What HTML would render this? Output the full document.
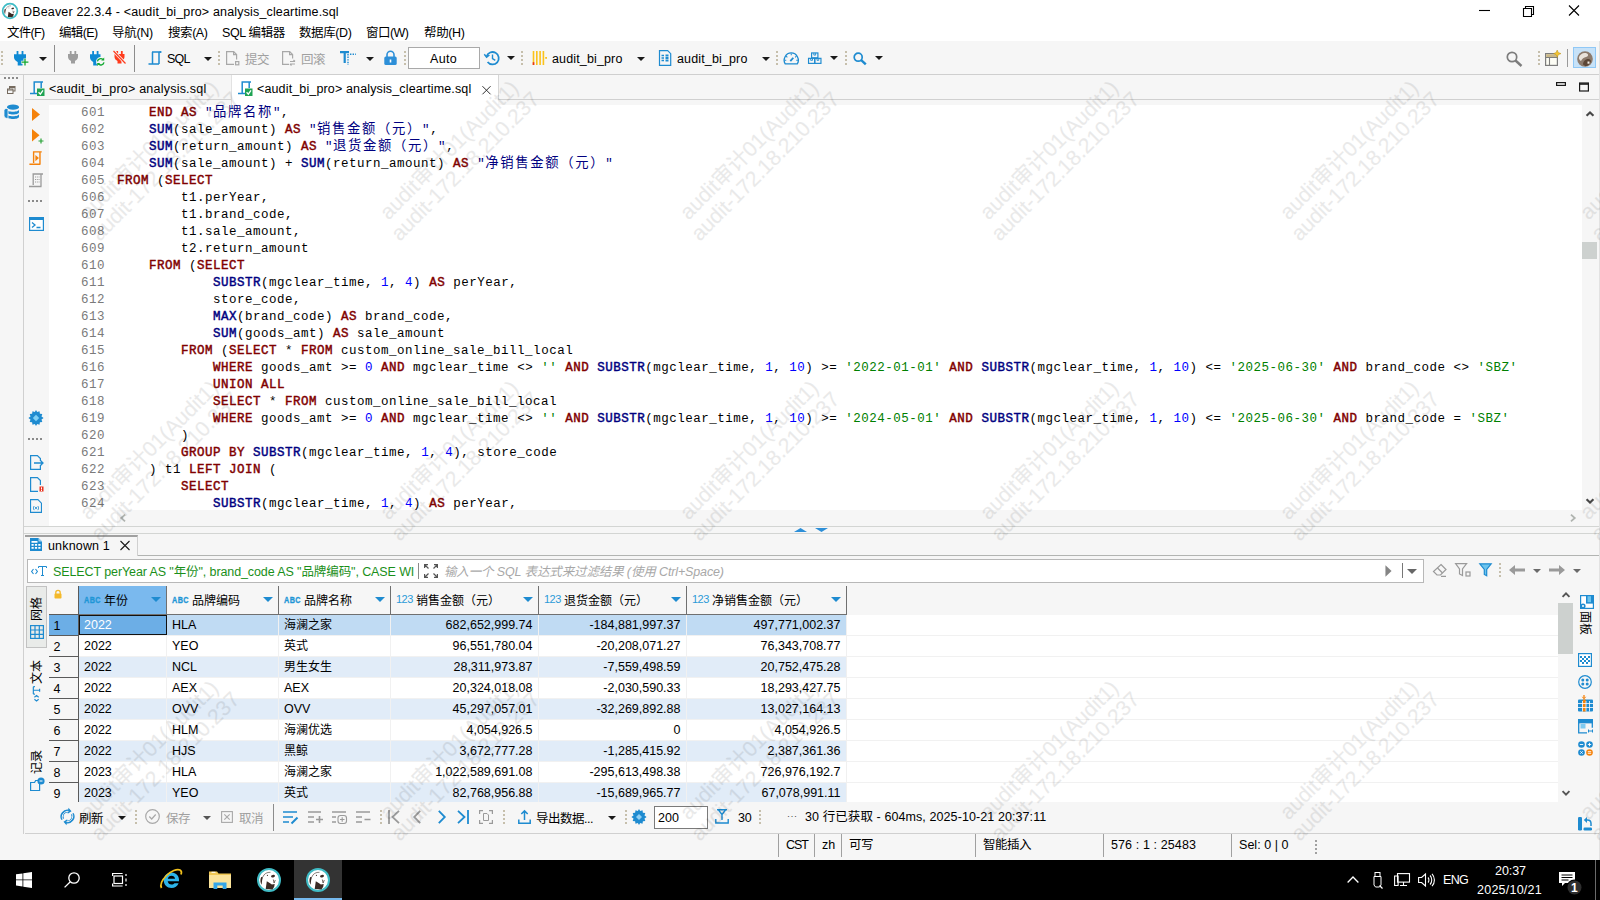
<!DOCTYPE html>
<html lang="zh"><head><meta charset="utf-8"><title>DBeaver 22.3.4 - &lt;audit_bi_pro&gt; analysis_cleartime.sql</title>
<style>
*{box-sizing:border-box;margin:0;padding:0}
html,body{width:1600px;height:900px;overflow:hidden;background:#f6f6f6}
body{position:relative;font-family:"Liberation Sans","Noto Sans CJK SC",sans-serif;font-size:12px;color:#000;line-height:1}
.abs{position:absolute}
.t{position:absolute;white-space:nowrap;line-height:16px;height:16px;font-size:12.500px}
svg{position:absolute;overflow:visible}
/* title + menu */
#title{left:0;top:0;width:1600px;height:23px;background:#fff}
#menu{left:0;top:23px;width:1600px;height:18px;background:#fff}
#toolbar{left:0;top:41px;width:1600px;height:34px;background:#f6f6f6;border-bottom:1px solid #cfcfcf}
.grip{position:absolute;width:2px;height:15px;background:repeating-linear-gradient(to bottom,#c6bfac 0,#c6bfac 2px,transparent 2px,transparent 4px)}
.vsep{position:absolute;width:1px;background:#8c8c8c}
.dd{position:absolute;width:0;height:0;border-left:4px solid transparent;border-right:4px solid transparent;border-top:4px solid #1a1a1a}
/* editor */
#code{left:49px;top:105px;width:1533px;height:405px;background:#fff;overflow:hidden}
.ln{position:absolute;left:0;height:17px;line-height:17px;white-space:pre;font-family:"Liberation Mono","Noto Sans CJK SC",monospace;font-size:12.500px;letter-spacing:.5px;color:#000}
.ln i{font-style:normal;color:#7a7a7a;position:absolute;left:32px}
.ln b{position:absolute;left:68px;font-weight:normal}
.k{color:#800000;-webkit-text-stroke:.45px #800000}
.f{color:#000080;-webkit-text-stroke:.45px #000080}
.n{color:#0000ff}
.s{color:#008000}
.q{color:#000080}
.c{font-family:"Noto Sans CJK SC",sans-serif;font-size:13.33px;letter-spacing:1.67px;line-height:0}
/* grid */
.hc{position:absolute;top:586px;height:29px;border-right:1px solid #707070;border-bottom:1px solid #707070;background:#f6f6f6}
.row{position:absolute;left:79px;width:767px;height:20px}
.row span{position:absolute;top:0;height:21px;line-height:21px;white-space:nowrap;font-size:12.500px}
.rh{position:absolute;left:49px;width:29px;height:21px;line-height:23px;padding-left:4.500px;border-bottom:1px solid #5a5a5a;font-size:12.500px}
.vt{position:absolute;width:24px;height:20px;line-height:20px;white-space:nowrap;transform-origin:0 0;transform:translateY(24px) rotate(-90deg);font-size:12px}
.vt2{position:absolute;width:24px;height:20px;line-height:20px;white-space:nowrap;transform-origin:0 0;transform:translateX(20px) rotate(90deg);font-size:12px}
.abc{font-size:9.800px;font-weight:bold;color:#1e96d6;-webkit-text-stroke:.35px #1e96d6;letter-spacing:.6px;transform:scaleX(.74);transform-origin:0 50%}
.n123{font-size:11px;color:#2d9bd8;letter-spacing:-.5px}
.wm{position:absolute;width:260px;height:50px;margin-left:-130px;margin-top:-25px;transform:rotate(-45deg);color:#000;opacity:.082;-webkit-text-stroke:.15px #000;letter-spacing:-.1px;font-size:21.33px;line-height:23px;white-space:nowrap;text-align:center;pointer-events:none;font-family:"Liberation Sans","Noto Sans CJK SC",sans-serif}
</style></head><body>
<!-- TITLE BAR -->
<div id="title" class="abs">
<svg style="left:2px;top:3px" width="16" height="16" viewBox="0 0 24 24"><circle cx="12" cy="12" r="11" fill="#fff" stroke="#40bcc6" stroke-width="2.600"/><path d="M9.800 13.200l2.900 1.700 2.200 1.700 2.800-.6-.5 2.800-1.700 2.600-6.800-.4.600-4.200z" fill="#3a2a24"/><ellipse cx="16" cy="8.200" rx="2" ry="1.250" transform="rotate(-12 16 8.200)" fill="#3a2a24"/><path d="M4.200 9C3 11.500 3.300 14.500 4.600 16.800 5 14 5 11.500 6 9.200z" fill="#3a2a24"/><path d="M5.800 9C7 5.800 10 4 13.500 4.300" fill="none" stroke="#3a2a24" stroke-width=".6"/><circle cx="10.400" cy="7.400" r=".55" fill="#3a2a24"/><path d="M16.300 11.500l.8 3.500 1.200-3" fill="none" stroke="#3a2a24" stroke-width=".7"/></svg>
<div class="t" style="left:23px;top:4px;letter-spacing:0.16px">DBeaver 22.3.4 - &lt;audit_bi_pro&gt; analysis_cleartime.sql</div>
<svg style="left:1479px;top:5px" width="110" height="12" viewBox="0 0 110 12" fill="none" stroke="#000" stroke-width="1.100"><path d="M0 5.500h11"/><path d="M44.500 3.500h8v8h-8zM46.500 3.500v-2h8v8h-2"/><path d="M90 .5l10 10M100 .5l-10 10"/></svg>
</div>
<!-- MENU BAR -->
<div id="menu" class="abs">
<div class="t" style="left:7px;top:2px;letter-spacing:-0.69px">文件(F)</div>
<div class="t" style="left:59px;top:2px;letter-spacing:-0.63px">编辑(E)</div>
<div class="t" style="left:112px;top:2px;letter-spacing:-0.27px">导航(N)</div>
<div class="t" style="left:168px;top:2px;letter-spacing:-0.43px">搜索(A)</div>
<div class="t" style="left:222px;top:2px;letter-spacing:-0.36px">SQL 编辑器</div>
<div class="t" style="left:299px;top:2px;letter-spacing:-0.39px">数据库(D)</div>
<div class="t" style="left:366px;top:2px;letter-spacing:-0.53px">窗口(W)</div>
<div class="t" style="left:424px;top:2px;letter-spacing:-0.37px">帮助(H)</div>
</div>
<!-- TOOLBAR -->
<div id="toolbar" class="abs">
<div class="grip" style="left:1px;top:10px"></div>
<!-- new connection -->
<svg style="left:13.500px;top:9.500px" width="16" height="16" viewBox="0 0 16 16"><path d="M2.600 0h1.800v3.300h3.200V0h1.800v3.300H12v3.200c0 2.300-2 3.800-3.500 4.500v3.500H3.700V11C2.200 10.300 0 8.800 0 6.500V3.300h2.600z" fill="#0e8ad4"/><path d="M11 7.500v7.500M7.200 11.200h7.600" stroke="#f6f6f6" stroke-width="3"/><path d="M11 7.800v6.800M7.600 11.200h6.800" stroke="#10a830" stroke-width="1.300"/></svg>
<div class="dd" style="left:39px;top:16px"></div>
<div class="vsep" style="left:54px;top:4px;height:27px"></div>
<!-- disconnected gray plug -->
<svg style="left:67.500px;top:10px" width="10" height="13" viewBox="0 0 10 13"><path d="M1.800 0h1.800v3h2.800V0h1.800v3H10v3c0 2-1.600 3.300-3 4v2.500H3V10C1.600 9.300 0 8 0 6V3h1.800z" fill="#9d9d9d"/></svg>
<!-- reconnect -->
<svg style="left:89.500px;top:9.500px" width="16" height="16" viewBox="0 0 16 16"><path d="M2.200 0H4v3.300h2.700V0h1.800v3.300h2V6.500c0 2.300-1.800 3.800-3.200 4.500v3.500H3.200V11C1.800 10.300 0 8.800 0 6.500V3.300h2.200z" fill="#0e8ad4"/><circle cx="10.700" cy="10.800" r="4.700" fill="#f6f6f6"/><path d="M7.400 10.300a3.400 3.400 0 0 1 5.600-1.800M14 11.300a3.400 3.400 0 0 1-5.600 1.800" stroke="#10a830" stroke-width="1.300" fill="none"/><path d="M14.200 6.600v3h-3zM7.200 15v-3h3z" fill="#10a830"/></svg>
<!-- disconnect red -->
<svg style="left:113px;top:10px" width="13" height="13" viewBox="0 0 13 13"><path d="M3.300 0h1.800v3h2.800V0h1.800v3h1.800v3c0 2-1.600 3.300-3 4v2.500h-4V10c-1.400-.7-3-2-3-4V3h1.800z" fill="#ff3b1c"/><path d="M.8.300l11.500 12" stroke="#f6f6f6" stroke-width="2.800"/><path d="M.5 0l12 12.500" stroke="#ff3b1c" stroke-width="1.200"/></svg>
<div class="vsep" style="left:134px;top:4px;height:27px"></div>
<!-- SQL script -->
<svg style="left:148px;top:10px" width="14" height="14" viewBox="0 0 14 14" fill="none" stroke="#1e8bd0" stroke-width="1.500"><path d="M4 1h9M4.500 1v11.500M11 1.500v11.500M.5 13h10.500"/><path d="M11.500 1h2" stroke-width="1.500"/></svg>
<div class="t" style="left:167px;top:10px;letter-spacing:-0.84px">SQL</div>
<div class="dd" style="left:204px;top:16px"></div>
<div class="grip" style="left:218px;top:10px"></div>
<!-- commit -->
<svg style="left:226px;top:10px" width="14" height="15" viewBox="0 0 14 15" fill="none" stroke="#a8a8a8" stroke-width="1.200"><path d="M8 13.400H.6V.6h7l3 3v5"/><path d="M7.600.6v3h3"/><rect x="9.600" y="10.600" width="3.200" height="3.200"/></svg>
<div class="t" style="left:245px;top:10.500px;color:#a0a0a0;letter-spacing:-0.51px">提交</div>
<!-- rollback -->
<svg style="left:282px;top:10px" width="14" height="15" viewBox="0 0 14 15" fill="none" stroke="#a8a8a8" stroke-width="1.200"><path d="M7 13.400H.6V.6h7l3 3v4"/><path d="M7.600.6v3h3"/><path d="M8 10.500h5M11.500 9l1.500 1.500M13 13H8M9.500 14.500L8 13"/></svg>
<div class="t" style="left:301px;top:10.500px;color:#a0a0a0;letter-spacing:-0.51px">回滚</div>
<!-- T icon -->
<svg style="left:340px;top:10px" width="17" height="15" viewBox="0 0 17 15"><path d="M0 0h9v2.200H5.800V12H3.600V2.200H0z" fill="#1e8bd0"/><path d="M8 3v11" stroke="#1e8bd0" stroke-width="1.400" stroke-dasharray="1.400 1.200"/><path d="M10 3.200h6" stroke="#1e8bd0" stroke-width="1.400" stroke-dasharray="1.400 1.200"/></svg>
<div class="dd" style="left:366px;top:16px"></div>
<!-- lock -->
<svg style="left:384px;top:9px" width="13" height="16" viewBox="0 0 13 16"><path d="M3 7V4.800a3.500 3.500 0 0 1 7 0V7" fill="none" stroke="#2d8fd8" stroke-width="1.600"/><rect x=".3" y="6.500" width="12.400" height="8.500" rx="1.500" fill="#2d8fd8"/><rect x="5.700" y="9.500" width="1.600" height="3" fill="#fff"/></svg>
<div class="grip" style="left:404px;top:10px"></div>
<div class="abs" style="left:408px;top:6px;width:72px;height:22px;background:#fff;border:1px solid #a9a9a9"></div>
<div class="t" style="left:430px;top:10px;letter-spacing:0.32px">Auto</div>
<!-- history -->
<svg style="left:484px;top:9px" width="16" height="16" viewBox="0 0 16 16" fill="none" stroke="#1e8bd0" stroke-width="1.800"><path d="M2.600 6.500A6.200 6.200 0 1 1 3.600 12"/><path d="M.3 4.300l2.300 3 2.800-2.300" stroke-width="1.400"/><path d="M8.500 4.500v4l2.800 1.800" stroke-width="1.400"/></svg>
<div class="dd" style="left:507px;top:15px"></div>
<div class="grip" style="left:521px;top:10px"></div>
<!-- db bars -->
<svg style="left:532px;top:9px" width="16" height="16" viewBox="0 0 16 16"><path d="M1.500 1v14M4.800 1v14M8.100 1v14M11.400 1v14" stroke="#fbc31c" stroke-width="1.600"/><rect x=".7" y="12.200" width="1.600" height="2.800" fill="#e8301c"/><rect x="13.200" y="7" width="1.800" height="1.800" fill="#fbc31c"/></svg>
<div class="t" style="left:552px;top:10px;letter-spacing:0.14px">audit_bi_pro</div>
<div class="dd" style="left:637px;top:16px"></div>
<!-- doc -->
<svg style="left:658px;top:9px" width="14" height="16" viewBox="0 0 14 16" fill="none" stroke="#1e8bd0" stroke-width="1.200"><path d="M1.500.7h8.200l3 3v11.600H1.500z"/><path d="M3.500 5.500h2.500M3.500 8h2.500M3.500 10.500h2.500" stroke-width="1.300"/><path d="M7.500 5.500h3M7.500 8h3M7.500 10.500h3" stroke-width="1.900"/></svg>
<div class="t" style="left:677px;top:10px;letter-spacing:0.14px">audit_bi_pro</div>
<div class="dd" style="left:762px;top:16px"></div>
<div class="grip" style="left:776px;top:10px"></div>
<!-- dashboard -->
<svg style="left:783px;top:11px" width="16.500" height="13" viewBox="0 0 17 14" fill="none" stroke="#1e8bd0" stroke-width="1.400"><path d="M2 12.800C-1 8 2.500 1 8.500 1s9.500 7 6.500 11.800z"/><path d="M8.500 1.500v2M3 4.500l1.300 1.300M14 4.500l-1.300 1.300M1.300 9h1.800M15.700 9h-1.800" stroke-width="1.100"/><path d="M7.500 9.800l3.200-3.600" stroke-width="2"/></svg>
<!-- boxes -->
<svg style="left:808px;top:11px" width="13.500" height="12.500" viewBox="0 0 15 13" fill="none" stroke="#1e8bd0" stroke-width="1.300"><rect x="4" y=".6" width="7" height="5.400"/><rect x=".6" y="6.600" width="6.900" height="5.600"/><rect x="7.500" y="6.600" width="6.900" height="5.600"/><path d="M6.500.6v2.400h2v-2.400M3 6.600v2.200h2v-2.200M10 6.600v2.200h2v-2.200" stroke-width="1"/></svg>
<div class="dd" style="left:830px;top:15px"></div>
<div class="grip" style="left:845px;top:10px"></div>
<!-- search blue -->
<svg style="left:853px;top:11px" width="14" height="13" viewBox="0 0 14 13" fill="none" stroke="#1e8bd0"><circle cx="5.200" cy="5.200" r="4" stroke-width="1.700"/><path d="M8.200 8.200l4.600 4.200" stroke-width="2.400"/></svg>
<div class="dd" style="left:875px;top:15px"></div>
<!-- right side -->
<svg style="left:1506px;top:10px" width="17" height="16" viewBox="0 0 17 16" fill="none" stroke="#7d7d7d"><circle cx="6" cy="6" r="4.700" stroke-width="1.700"/><path d="M9.500 9.500l6 5.500" stroke-width="2.400"/></svg>
<div class="grip" style="left:1538px;top:10px"></div>
<svg style="left:1545px;top:9px" width="16" height="16" viewBox="0 0 16 16"><rect x=".6" y="3.600" width="11.800" height="11.800" fill="#fdfdf5" stroke="#7d7d7d" stroke-width="1.200"/><path d="M.6 7.500h11.800M4.500 7.500v8" stroke="#7d7d7d" stroke-width="1.100" fill="none"/><rect x="1.200" y="4.200" width="10.600" height="2.800" fill="#c9b788"/><path d="M12.200 0l1.100 2.600 2.700 1-2.700 1.100-1.100 2.700-1.100-2.700-2.600-1.100 2.600-1z" fill="#f4c431" stroke="#b8901a" stroke-width=".5"/></svg>
<div class="vsep" style="left:1567px;top:8px;height:18px;background:#9a9a9a"></div>
<div class="abs" style="left:1573px;top:6px;width:23px;height:21px;background:#c7e2f8;border:1px solid #90c8f6"></div>
<svg style="left:1577px;top:9.500px" width="16" height="16" viewBox="0 0 16 16"><circle cx="8" cy="8" r="7.800" fill="#8c7a6c"/><path d="M2 6c1-3 5-5 8-3.500 2 1 1 3-1 3.500S5 7.500 4 10c-1-.5-2.500-2-2-4z" fill="#e9e2da"/><path d="M6 13.500c0-3 2-5.500 5.500-5.500 1.500 0 2.500 1 2.500 2.500-.8 2.500-3 4.300-5.500 4.800z" fill="#5c4636"/><path d="M10.500 10.500h2v2.200h-2z" fill="#f2ece4"/></svg>
</div>
<!-- LEFT STRIP + TABS -->
<div class="abs" style="left:23px;top:75px;width:1px;height:759px;background:#d0d0d0"></div>
<div class="abs" style="left:4px;top:77px;width:15px;height:2px;background:repeating-linear-gradient(to right,#8a8a8a 0,#8a8a8a 2px,transparent 2px,transparent 4px)"></div>
<svg style="left:7px;top:86px" width="9" height="8" viewBox="0 0 9 8" fill="#f6f6f6" stroke="#756a5e" stroke-width="1"><rect x="2.500" y=".5" width="5.500" height="4.500"/><rect x=".5" y="3" width="5.500" height="4.500"/><path d="M.5 4h5.500M2.500 1.500h5.500" stroke-width="1.200"/></svg>
<!-- db icon -->
<svg style="left:4px;top:104px" width="16" height="16" viewBox="0 0 16 16" fill="#1e8bd0"><ellipse cx="9" cy="3.200" rx="6" ry="2.600"/><path d="M3 5.500c0 3 12 3 12 0v2.700c0 3-12 3-12 0zM3 10c0 3 12 3 12 0v2.700c0 3-12 3-12 0z"/><path d="M0 6.500c0-2 3-2.300 4-2v10C2 14.500 0 13.500 0 12z" fill="#1e8bd0" stroke="#f6f6f6" stroke-width=".8"/></svg>
<!-- tab bar -->
<div class="abs" style="left:25px;top:99px;width:1575px;height:1px;background:#d0d0d0"></div>
<div class="abs" style="left:231px;top:75px;width:268px;height:30px;background:#fff;border-right:1px solid #d6d6d6;border-left:1px solid #e2e2e2"></div>
<div class="abs" style="left:498px;top:100px;width:1102px;height:5px;background:#f6f6f6"></div>
<svg class="tabico" style="left:30px;top:81px" width="15" height="15" viewBox="0 0 15 15"><g fill="none" stroke="#1e8bd0" stroke-width="1.500"><path d="M3.500 1h9.500M4.200 1v11M11.200 1v6M0 12.500h8"/></g><rect x="7" y="7.500" width="7.500" height="7.500" fill="#1fa353"/><path d="M8.600 11.200l1.700 1.900 2.700-3.800" fill="none" stroke="#fff" stroke-width="1.300"/></svg>
<div class="t" style="left:49px;top:81px;letter-spacing:0.22px">&lt;audit_bi_pro&gt; analysis.sql</div>
<svg class="tabico" style="left:238px;top:81px" width="15" height="15" viewBox="0 0 15 15"><g fill="none" stroke="#1e8bd0" stroke-width="1.500"><path d="M3.500 1h9.500M4.200 1v11M11.200 1v6M0 12.500h8"/></g><rect x="7" y="7.500" width="7.500" height="7.500" fill="#1fa353"/><path d="M8.600 11.200l1.700 1.900 2.700-3.800" fill="none" stroke="#fff" stroke-width="1.300"/></svg>
<div class="t" style="left:257px;top:81px;letter-spacing:0.14px">&lt;audit_bi_pro&gt; analysis_cleartime.sql</div>
<svg style="left:481.500px;top:85.500px" width="9" height="8.500" viewBox="0 0 10 9" stroke="#1a1a1a" stroke-width="1"><path d="M.5 0l9 9M9.500 0l-9 9"/></svg>
<!-- min / max -->
<svg style="left:1556px;top:82px" width="40" height="12" viewBox="0 0 40 12" fill="none" stroke="#1a1a1a" stroke-width="1.200"><rect x=".6" y=".6" width="8.800" height="2.800"/><rect x="23.600" y="1" width="8.800" height="8"/><path d="M23.600 2h8.800" stroke-width="1.600"/></svg>
<!-- EDITOR -->
<div id="code" class="abs">
<div class="ln" style="top:-0.4px"><i>601</i><b>    <span class="k">END</span> <span class="k">AS</span> <span class="q">"<span class="c">品牌名称</span>"</span>,</b></div>
<div class="ln" style="top:16.6px"><i>602</i><b>    <span class="f">SUM</span>(sale_amount) <span class="k">AS</span> <span class="q">"<span class="c">销售金额（元）</span>"</span>,</b></div>
<div class="ln" style="top:33.6px"><i>603</i><b>    <span class="f">SUM</span>(return_amount) <span class="k">AS</span> <span class="q">"<span class="c">退货金额（元）</span>"</span>,</b></div>
<div class="ln" style="top:50.6px"><i>604</i><b>    <span class="f">SUM</span>(sale_amount) + <span class="f">SUM</span>(return_amount) <span class="k">AS</span> <span class="q">"<span class="c">净销售金额（元）</span>"</span></b></div>
<div class="ln" style="top:67.6px"><i>605</i><b><span class="k">FROM</span> (<span class="k">SELECT</span></b></div>
<div class="ln" style="top:84.6px"><i>606</i><b>        t1.perYear,</b></div>
<div class="ln" style="top:101.6px"><i>607</i><b>        t1.brand_code,</b></div>
<div class="ln" style="top:118.6px"><i>608</i><b>        t1.sale_amount,</b></div>
<div class="ln" style="top:135.6px"><i>609</i><b>        t2.return_amount</b></div>
<div class="ln" style="top:152.6px"><i>610</i><b>    <span class="k">FROM</span> (<span class="k">SELECT</span></b></div>
<div class="ln" style="top:169.6px"><i>611</i><b>            <span class="f">SUBSTR</span>(mgclear_time, <span class="n">1</span>, <span class="n">4</span>) <span class="k">AS</span> perYear,</b></div>
<div class="ln" style="top:186.6px"><i>612</i><b>            store_code,</b></div>
<div class="ln" style="top:203.6px"><i>613</i><b>            <span class="f">MAX</span>(brand_code) <span class="k">AS</span> brand_code,</b></div>
<div class="ln" style="top:220.6px"><i>614</i><b>            <span class="f">SUM</span>(goods_amt) <span class="k">AS</span> sale_amount</b></div>
<div class="ln" style="top:237.6px"><i>615</i><b>        <span class="k">FROM</span> (<span class="k">SELECT</span> * <span class="k">FROM</span> custom_online_sale_bill_local</b></div>
<div class="ln" style="top:254.6px"><i>616</i><b>            <span class="k">WHERE</span> goods_amt &gt;= <span class="n">0</span> <span class="k">AND</span> mgclear_time &lt;&gt; <span class="s">&#x27;&#x27;</span> <span class="k">AND</span> <span class="f">SUBSTR</span>(mgclear_time, <span class="n">1</span>, <span class="n">10</span>) &gt;= <span class="s">&#x27;2022-01-01&#x27;</span> <span class="k">AND</span> <span class="f">SUBSTR</span>(mgclear_time, <span class="n">1</span>, <span class="n">10</span>) &lt;= <span class="s">&#x27;2025-06-30&#x27;</span> <span class="k">AND</span> brand_code &lt;&gt; <span class="s">&#x27;SBZ&#x27;</span></b></div>
<div class="ln" style="top:271.6px"><i>617</i><b>            <span class="k">UNION</span> <span class="k">ALL</span></b></div>
<div class="ln" style="top:288.6px"><i>618</i><b>            <span class="k">SELECT</span> * <span class="k">FROM</span> custom_online_sale_bill_local</b></div>
<div class="ln" style="top:305.6px"><i>619</i><b>            <span class="k">WHERE</span> goods_amt &gt;= <span class="n">0</span> <span class="k">AND</span> mgclear_time &lt;&gt; <span class="s">&#x27;&#x27;</span> <span class="k">AND</span> <span class="f">SUBSTR</span>(mgclear_time, <span class="n">1</span>, <span class="n">10</span>) &gt;= <span class="s">&#x27;2024-05-01&#x27;</span> <span class="k">AND</span> <span class="f">SUBSTR</span>(mgclear_time, <span class="n">1</span>, <span class="n">10</span>) &lt;= <span class="s">&#x27;2025-06-30&#x27;</span> <span class="k">AND</span> brand_code = <span class="s">&#x27;SBZ&#x27;</span></b></div>
<div class="ln" style="top:322.6px"><i>620</i><b>        )</b></div>
<div class="ln" style="top:339.6px"><i>621</i><b>        <span class="k">GROUP</span> <span class="k">BY</span> <span class="f">SUBSTR</span>(mgclear_time, <span class="n">1</span>, <span class="n">4</span>), store_code</b></div>
<div class="ln" style="top:356.6px"><i>622</i><b>    ) t1 <span class="k">LEFT</span> <span class="k">JOIN</span> (</b></div>
<div class="ln" style="top:373.6px"><i>623</i><b>        <span class="k">SELECT</span></b></div>
<div class="ln" style="top:390.6px"><i>624</i><b>            <span class="f">SUBSTR</span>(mgclear_time, <span class="n">1</span>, <span class="n">4</span>) <span class="k">AS</span> perYear,</b></div>
</div>
<!-- gutter icons -->
<svg style="left:32px;top:108px" width="8" height="13" viewBox="0 0 8 13"><path d="M0 0l8 6.500-8 6.500z" fill="#f5820b"/></svg>
<svg style="left:32px;top:129px" width="12" height="15" viewBox="0 0 12 15"><path d="M0 0l7.500 6.200L0 12.500z" fill="#f5820b"/><path d="M9 9.500v5M6.500 12h5" stroke="#2aa338" stroke-width="1.200"/></svg>
<svg style="left:29px;top:151px" width="14" height="15" viewBox="0 0 15 17" fill="none" stroke="#f5820b" stroke-width="1.600"><path d="M4 1h10M4.800 1v12.500M12 1v14M0 15h12.500"/><path d="M6.800 4.500l4 3.500-4 3.500z" fill="#f5820b" stroke="none"/></svg>
<svg style="left:29px;top:173px" width="15" height="15" viewBox="0 0 15 15" fill="none" stroke="#9b9b9b" stroke-width="1.300"><path d="M3.500 1h10.500M4.200 1v11M12 1v12.500M0 13.500h12.500"/><path d="M6 4h4.500M6 6.500h4.500M6 9h4.500" stroke-width="1" stroke-dasharray="1 .8"/></svg>
<div class="abs" style="left:28px;top:200px;width:15px;height:2px;background:repeating-linear-gradient(to right,#8a8a8a 0,#8a8a8a 2px,transparent 2px,transparent 4px)"></div>
<svg style="left:29px;top:217px" width="15" height="14" viewBox="0 0 15 14"><rect x=".6" y=".6" width="13.800" height="12.800" fill="#fff" stroke="#1e8bd0" stroke-width="1.200"/><rect x=".6" y=".6" width="13.800" height="2.400" fill="#1e8bd0"/><path d="M3 5.500l3 2.500-3 2.500M7.500 10.500h4" fill="none" stroke="#1e8bd0" stroke-width="1.300"/></svg>
<svg style="left:28px;top:410px" width="16" height="16" viewBox="0 0 16 16"><path d="M8 0l1.200 2.100 2.300-.8.400 2.400 2.400.4-.8 2.300L15.600 8l-2.100 1.600.8 2.300-2.400.4-.4 2.400-2.300-.8L8 16l-1.200-2.100-2.300.8-.4-2.400-2.400-.4.8-2.300L.4 8l2.100-1.600-.8-2.300 2.400-.4.400-2.400 2.300.8z" fill="#1e8bd0"/><path d="M8 4.800L11.200 8 8 11.200 4.800 8z" fill="#7fd0f5"/></svg>
<div class="abs" style="left:28px;top:438px;width:15px;height:2px;background:repeating-linear-gradient(to right,#8a8a8a 0,#8a8a8a 2px,transparent 2px,transparent 4px)"></div>
<svg style="left:30px;top:455px" width="14" height="15" viewBox="0 0 14 15" fill="none" stroke="#1e8bd0" stroke-width="1.200"><path d="M10.400 10v4.400H.6V.6h6.800l3 3V6"/><path d="M4 8h9M10.500 5.500L13 8l-2.500 2.500" stroke-width="1.300"/></svg>
<svg style="left:30px;top:477px" width="14" height="15" viewBox="0 0 14 15" fill="none" stroke="#1e8bd0" stroke-width="1.200"><path d="M8 14.400H.6V.6h6.800l3 3V8"/><rect x="9.500" y="9.500" width="4" height="5" fill="#e8301c" stroke="none"/><rect x="11" y="10.300" width="1" height="2.200" fill="#fff" stroke="none"/><rect x="11" y="13" width="1" height="1" fill="#fff" stroke="none"/></svg>
<svg style="left:30px;top:499px" width="12" height="14" viewBox="0 0 13 15" fill="none" stroke="#1e8bd0" stroke-width="1.200"><path d="M.6 14.400V.6h8l3.800 3.800v10z"/><path d="M4.500 7.500c-1 1.500-1 3 0 4.500M8.500 7.500c1 1.500 1 3 0 4.500M5.500 8.500l2 2.500M7.500 8.500l-2 2.500" stroke-width=".9"/></svg>
<!-- editor v scroll -->

<svg style="left:1585.500px;top:111px" width="8" height="6" viewBox="0 0 10 6" fill="none" stroke="#484848" stroke-width="2.600"><path d="M.7 5.300L5 1l4.300 4.300"/></svg>
<div class="abs" style="left:1582px;top:242px;width:15px;height:17px;background:#cdd1cf"></div>
<svg style="left:1585.500px;top:498px" width="8" height="6" viewBox="0 0 10 6" fill="none" stroke="#484848" stroke-width="2.600"><path d="M.7.7L5 5l4.300-4.300"/></svg>
<!-- h scroll -->
<div class="abs" style="left:49px;top:510px;width:68px;height:16px;background:#fff"></div>
<svg style="left:120px;top:513.500px" width="6" height="8" viewBox="0 0 6 9" fill="none" stroke="#b0b4b0" stroke-width="2"><path d="M5.300.7L1 4.500l4.300 3.800"/></svg>
<svg style="left:1570px;top:513.500px" width="6" height="8" viewBox="0 0 6 9" fill="none" stroke="#b0b4b0" stroke-width="2"><path d="M.7.7L5 4.500.7 8.300"/></svg>
<div class="abs" style="left:24px;top:526px;width:1576px;height:1px;background:#d3d5d3"></div>
<div class="abs" style="left:24px;top:533px;width:1576px;height:1px;background:#d3d5d3"></div>
<svg style="left:794px;top:528px" width="35" height="4" viewBox="0 0 35 4" fill="#2d8fd8"><path d="M0 4l6.500-4 6.500 4zM21 0h13l-6.500 4z"/></svg>
<!-- RESULTS TAB -->
<div class="abs" style="left:25px;top:555px;width:1574px;height:1px;background:#b2b4b2"></div>
<div class="abs" style="left:25px;top:535px;width:113px;height:21px;background:#f6f6f6;border-top:2px solid #a0a0a0;border-right:1px solid #d0d0d0"></div>
<svg style="left:30px;top:538px" width="12" height="13" viewBox="0 0 12 13"><path d="M0 0h8.500l3.500 3.500V13H0z" fill="#1e8bd0"/><path d="M8.500 0v3.500H12" fill="#9fd0f0"/><path d="M1.500 3h6v1.800h-6zM1.500 6h2.200v1.700H1.500zM4.900 6h2.200v1.700H4.900zM8.300 6h2.200v1.700H8.300zM1.500 9h2.200v1.700H1.500zM4.900 9h2.200v1.700H4.900zM8.300 9h2.200v1.700H8.300z" fill="#fff"/></svg>
<div class="t" style="left:48px;top:538px;letter-spacing:0.17px">unknown 1</div>
<svg style="left:120px;top:541px" width="10" height="9" viewBox="0 0 10 9" stroke="#1a1a1a" stroke-width="1.100"><path d="M.5 0l9 9M9.500 0l-9 9"/></svg>
<!-- FILTER BAR -->
<div class="abs" style="left:27px;top:559px;width:1397px;height:24px;background:#fff;border:1px solid #b8b8b8"></div>
<svg style="left:31px;top:565px" width="16" height="12" viewBox="0 0 16 12" fill="none" stroke="#1e8bd0" stroke-width="1.100"><path d="M2.500 4L.6 6.500 2.500 9M4.500 4l1.900 2.500L4.500 9"/><path d="M7.500 3V1.500h8V3M11.500 1.500v9M10 10.500h3" stroke-width="1"/></svg>
<div class="t" style="left:53px;top:564px;color:#1a8f1a;letter-spacing:-0.10px">SELECT perYear AS "年份", brand_code AS "品牌编码", CASE WI</div>
<div class="abs" style="left:418px;top:563px;width:1px;height:16px;background:#8a8a8a"></div>
<svg style="left:424px;top:564px" width="14" height="14" viewBox="0 0 14 14" fill="none" stroke="#555" stroke-width="1.200"><path d="M.6 4V.6H4M10 .6h3.400V4M13.400 10v3.400H10M4 13.400H.6V10M1 1l3.500 3.500M13 1L9.500 4.500M13 13L9.500 9.500M1 13l3.500-3.500"/></svg>
<div class="t" style="left:444px;top:564px;color:#a8a8a8;font-style:italic;letter-spacing:-0.13px">输入一个 SQL 表达式来过滤结果 (使用 Ctrl+Space)</div>
<svg style="left:1385px;top:564.500px" width="7" height="12" viewBox="0 0 8 13"><path d="M.5 0l7 6.500-7 6.500z" fill="#858585"/></svg>
<div class="abs" style="left:1402px;top:563px;width:1px;height:15px;background:#777"></div>
<div class="dd" style="left:1407px;top:569px;border-top-color:#666;border-width:5px 5px 0 5px"></div>
<svg style="left:1432px;top:563px" width="15" height="14" viewBox="0 0 15 14" fill="none" stroke="#9a9a9a" stroke-width="1.200"><path d="M9 1.500l5 5-5.500 5.500H5L1.500 8.500z"/><path d="M5.500 5l5 5M9 13.400h5"/></svg>
<svg style="left:1455px;top:563px" width="16" height="14" viewBox="0 0 16 14" fill="none" stroke="#9a9a9a" stroke-width="1.200"><path d="M.6.6h11L7.500 6v6.500l-3-1.500V6z"/><rect x="11" y="9" width="4" height="4"/></svg>
<svg style="left:1479px;top:563px" width="13" height="14" viewBox="0 0 13 14"><path d="M.8.800h11.400L7.700 6.500v6.200L5.300 11.500V6.500z" fill="#6cc4ee" stroke="#1e8bd0" stroke-width="1.200"/></svg>
<div class="grip" style="left:1499px;top:563px"></div>
<svg style="left:1509px;top:564px" width="72" height="12" viewBox="0 0 72 12" fill="#9a9a9a"><path d="M0 6l6-5v3.500h10v3H6V11zM56 6l-6-5v3.500H40v3h10V11z"/><path d="M24 5h8l-4 4zM64 5h8l-4 4z" fill="#6a6a6a"/></svg>
<!-- GRID -->
<div class="abs" style="left:49px;top:586px;width:1509px;height:216px;background:#f6f6f6"></div>
<div class="abs" style="left:847px;top:615px;width:711px;height:187px;background:#fff"></div>
<div class="abs" style="left:49px;top:614px;width:30px;height:188px;background:#f6f6f6"></div>
<div class="abs" style="left:78px;top:586px;width:1px;height:216px;background:#5a5a5a"></div>
<div class="abs" style="left:79px;top:614px;width:768px;height:188px;background:#fff"></div>
<div class="abs" style="left:49px;top:614px;width:30px;height:1px;background:#5a5a5a"></div>
<!-- header cells -->
<div class="hc" style="left:79px;width:88px;background:#7ab9ee"></div>
<div class="hc" style="left:167px;width:112px"></div>
<div class="hc" style="left:279px;width:112px"></div>
<div class="hc" style="left:391px;width:148px"></div>
<div class="hc" style="left:539px;width:148px"></div>
<div class="hc" style="left:687px;width:160px"></div>
<svg style="left:54px;top:590px" width="8" height="9" viewBox="0 0 8 9"><path d="M1.800 4V2.600a2.200 2.200 0 0 1 4.400 0V4" fill="none" stroke="#f4b92b" stroke-width="1.300"/><rect x=".5" y="3.600" width="7" height="5" rx=".8" fill="#f4b92b"/></svg>
<div class="t abc" style="left:84px;top:591.500px">ABC</div>
<div class="t" style="left:104px;top:593px;font-size:12px">年份</div>
<div class="dd" style="left:150.5px;top:597.300px;border-top-color:#1e8bd0;border-width:5px 5px 0 5px"></div>
<div class="t abc" style="left:172px;top:591.500px">ABC</div>
<div class="t" style="left:192px;top:593px;font-size:12px">品牌编码</div>
<div class="dd" style="left:262.5px;top:597.300px;border-top-color:#1e8bd0;border-width:5px 5px 0 5px"></div>
<div class="t abc" style="left:284px;top:591.500px">ABC</div>
<div class="t" style="left:304px;top:593px;font-size:12px">品牌名称</div>
<div class="dd" style="left:374.5px;top:597.300px;border-top-color:#1e8bd0;border-width:5px 5px 0 5px"></div>
<div class="t n123" style="left:396px;top:591px">123</div>
<div class="t" style="left:416px;top:593px;font-size:12px">销售金额（元）</div>
<div class="dd" style="left:522.5px;top:597.300px;border-top-color:#1e8bd0;border-width:5px 5px 0 5px"></div>
<div class="t n123" style="left:544px;top:591px">123</div>
<div class="t" style="left:564px;top:593px;font-size:12px">退货金额（元）</div>
<div class="dd" style="left:670.5px;top:597.300px;border-top-color:#1e8bd0;border-width:5px 5px 0 5px"></div>
<div class="t n123" style="left:692px;top:591px">123</div>
<div class="t" style="left:712px;top:593px;font-size:12px">净销售金额（元）</div>
<div class="dd" style="left:830.5px;top:597.300px;border-top-color:#1e8bd0;border-width:5px 5px 0 5px"></div>
<div class="rh" style="top:615px;background:#6caee6">1</div>
<div class="row" style="top:615px;background:#c0dbf3"><span style="left:5px">2022</span><span style="left:93px">HLA</span><span style="left:205px;font-size:12px">海澜之家</span><span style="right:313.5px">682,652,999.74</span><span style="right:165.5px">-184,881,997.37</span><span style="right:5.5px">497,771,002.37</span></div>
<div class="rh" style="top:636px">2</div>
<div class="row" style="top:636px;background:#ffffff"><span style="left:5px">2022</span><span style="left:93px">YEO</span><span style="left:205px;font-size:12px">英式</span><span style="right:313.5px">96,551,780.04</span><span style="right:165.5px">-20,208,071.27</span><span style="right:5.5px">76,343,708.77</span></div>
<div class="rh" style="top:657px">3</div>
<div class="row" style="top:657px;background:#e1ecf8"><span style="left:5px">2022</span><span style="left:93px">NCL</span><span style="left:205px;font-size:12px">男生女生</span><span style="right:313.5px">28,311,973.87</span><span style="right:165.5px">-7,559,498.59</span><span style="right:5.5px">20,752,475.28</span></div>
<div class="rh" style="top:678px">4</div>
<div class="row" style="top:678px;background:#ffffff"><span style="left:5px">2022</span><span style="left:93px">AEX</span><span style="left:205px">AEX</span><span style="right:313.5px">20,324,018.08</span><span style="right:165.5px">-2,030,590.33</span><span style="right:5.5px">18,293,427.75</span></div>
<div class="rh" style="top:699px">5</div>
<div class="row" style="top:699px;background:#e1ecf8"><span style="left:5px">2022</span><span style="left:93px">OVV</span><span style="left:205px">OVV</span><span style="right:313.5px">45,297,057.01</span><span style="right:165.5px">-32,269,892.88</span><span style="right:5.5px">13,027,164.13</span></div>
<div class="rh" style="top:720px">6</div>
<div class="row" style="top:720px;background:#ffffff"><span style="left:5px">2022</span><span style="left:93px">HLM</span><span style="left:205px;font-size:12px">海澜优选</span><span style="right:313.5px">4,054,926.5</span><span style="right:165.5px">0</span><span style="right:5.5px">4,054,926.5</span></div>
<div class="rh" style="top:741px">7</div>
<div class="row" style="top:741px;background:#e1ecf8"><span style="left:5px">2022</span><span style="left:93px">HJS</span><span style="left:205px;font-size:12px">黑鲸</span><span style="right:313.5px">3,672,777.28</span><span style="right:165.5px">-1,285,415.92</span><span style="right:5.5px">2,387,361.36</span></div>
<div class="rh" style="top:762px">8</div>
<div class="row" style="top:762px;background:#ffffff"><span style="left:5px">2023</span><span style="left:93px">HLA</span><span style="left:205px;font-size:12px">海澜之家</span><span style="right:313.5px">1,022,589,691.08</span><span style="right:165.5px">-295,613,498.38</span><span style="right:5.5px">726,976,192.7</span></div>
<div class="rh" style="top:783px">9</div>
<div class="row" style="top:783px;background:#e1ecf8"><span style="left:5px">2023</span><span style="left:93px">YEO</span><span style="left:205px;font-size:12px">英式</span><span style="right:313.5px">82,768,956.88</span><span style="right:165.5px">-15,689,965.77</span><span style="right:5.5px">67,078,991.11</span></div>
<div class="abs" style="left:79px;top:615px;width:88px;height:20px;background:#6caee6;border:1px solid #111"></div>
<div class="t" style="left:84px;top:615px;height:21px;line-height:21px;font-size:12.500px;color:#fff">2022</div>
<!-- grid col lines over rows -->
<div class="abs" style="left:79px;top:635px;width:1479px;height:1px;background:#f1f1f1"></div>
<div class="abs" style="left:79px;top:656px;width:1479px;height:1px;background:#f1f1f1"></div>
<div class="abs" style="left:79px;top:677px;width:1479px;height:1px;background:#f1f1f1"></div>
<div class="abs" style="left:79px;top:698px;width:1479px;height:1px;background:#f1f1f1"></div>
<div class="abs" style="left:79px;top:719px;width:1479px;height:1px;background:#f1f1f1"></div>
<div class="abs" style="left:79px;top:740px;width:1479px;height:1px;background:#f1f1f1"></div>
<div class="abs" style="left:79px;top:761px;width:1479px;height:1px;background:#f1f1f1"></div>
<div class="abs" style="left:79px;top:782px;width:1479px;height:1px;background:#f1f1f1"></div>

<div class="abs" style="left:166px;top:636px;width:1px;height:166px;background:#f1f1f1"></div>
<div class="abs" style="left:278px;top:615px;width:1px;height:187px;background:#f1f1f1"></div>
<div class="abs" style="left:390px;top:615px;width:1px;height:187px;background:#f1f1f1"></div>
<div class="abs" style="left:538px;top:615px;width:1px;height:187px;background:#f1f1f1"></div>
<div class="abs" style="left:686px;top:615px;width:1px;height:187px;background:#f1f1f1"></div>
<div class="abs" style="left:846px;top:615px;width:1px;height:187px;background:#f0f0f0"></div>
<!-- vertical side tabs (left) -->
<div class="abs" style="left:26px;top:586px;width:21px;height:62px;background:#e9ebe9;border:1px solid #c2c2c2"></div>
<div class="vt" style="left:27px;top:597px">网格</div>
<svg style="left:30px;top:625px" width="14" height="14" viewBox="0 0 14 14" fill="none" stroke="#1e8bd0" stroke-width="1.200"><rect x=".6" y=".6" width="12.800" height="12.800"/><path d="M.6 5h12.800M.6 9.300h12.800M5 .6v12.800M9.300.6v12.800"/></svg>
<div class="vt" style="left:27px;top:660px">文本</div>
<svg style="left:31px;top:686px" width="10" height="16" viewBox="0 0 8 15" fill="none" stroke="#1e8bd0" stroke-width="1.100"><path d="M1.500 .6v7M1.500 4H7.400M7.400 2.500v3M1.500.6H3M1.500 7.600H3"/><path d="M2.500 10.500L4.500 9l2 1.500M2.500 12.500l2 1.500 2-1.500"/></svg>
<div class="vt" style="left:27px;top:750px">记录</div>
<svg style="left:30px;top:777px" width="15" height="15" viewBox="0 0 15 15"><path d="M.6 5.500h4l1-2h3.500v2h.5v8h-9z" fill="none" stroke="#1e8bd0" stroke-width="1.200"/><circle cx="11" cy="4" r="3.600" fill="#1e8bd0"/><path d="M9.500 4h3" stroke="#fff" stroke-width="1"/></svg>
<!-- grid v scroll -->
<div class="abs" style="left:1558px;top:586px;width:17px;height:216px;background:#f6f6f6"></div>
<svg style="left:1561.500px;top:592px" width="8" height="6" viewBox="0 0 10 6" fill="none" stroke="#555" stroke-width="2.400"><path d="M.7 5.300L5 1l4.300 4.300"/></svg>
<div class="abs" style="left:1558px;top:603px;width:15px;height:51px;background:#cdd1cf"></div>
<svg style="left:1561.500px;top:790px" width="8" height="6" viewBox="0 0 10 6" fill="none" stroke="#555" stroke-width="2.400"><path d="M.7.7L5 5l4.300-4.300"/></svg>
<!-- right side panel -->
<div class="abs" style="left:1576px;top:586px;width:22px;height:216px;background:#f6f6f6"></div>
<svg style="left:1580px;top:595px" width="14" height="14" viewBox="0 0 14 14"><rect x=".6" y=".6" width="12.800" height="12.800" fill="#fff" stroke="#1e8bd0" stroke-width="1.200"/><rect x="6" y=".6" width="7.400" height="8" fill="#1e8bd0"/><rect x="7.500" y="1.200" width="3.500" height="6" fill="#6cc4ee"/><circle cx="3" cy="11" r="2.600" fill="#1e8bd0"/><circle cx="3" cy="11" r="1" fill="#fff"/></svg>
<div class="vt2" style="left:1575px;top:611px">面板</div>
<svg style="left:1578px;top:653px" width="14" height="14" viewBox="0 0 14 14"><rect x=".6" y=".6" width="12.800" height="12.800" fill="#fff" stroke="#1e8bd0" stroke-width="1.200"/><path d="M2 3h2v2H2zM6 3h2v2H6zM10 3h2v2h-2zM4 5h2v2H4zM8 5h2v2H8zM2 7h2v2H2zM6 7h2v2H6zM10 7h2v2h-2zM4 9h2v2H4zM8 9h2v2H8z" fill="#1e8bd0"/></svg>
<svg style="left:1578px;top:675px" width="14" height="14" viewBox="0 0 14 14" fill="none" stroke="#1e8bd0" stroke-width="1.200"><circle cx="7" cy="7" r="6.300"/><circle cx="4.800" cy="5" r=".9" fill="#1e8bd0"/><circle cx="9.200" cy="5" r=".9" fill="#1e8bd0"/><circle cx="4.800" cy="9" r=".9" fill="#1e8bd0"/><circle cx="9.200" cy="9" r=".9" fill="#1e8bd0"/></svg>
<svg style="left:1578px;top:695px" width="15" height="17" viewBox="0 0 15 17"><path d="M6 0v3.500" stroke="#f5820b" stroke-width="1.300"/><path d="M4.300 1.800L6 3.800l1.700-2" fill="none" stroke="#f5820b" stroke-width="1"/><rect x="0" y="4.500" width="15" height="12" rx="1" fill="#1e8bd0"/><rect x="4.800" y="4.500" width="3" height="12" fill="#f5820b"/><path d="M0 8.500h15M0 12.500h15M4.500 6v10.500M8 6v10.500M11.500 6v10.500" stroke="#fff" stroke-width=".8" fill="none"/></svg>
<svg style="left:1578px;top:719px" width="15" height="15" viewBox="0 0 15 15" fill="none" stroke="#1e8bd0" stroke-width="1.300"><path d="M9 13.800H.7V.7h13.600v8"/><rect x=".7" y=".7" width="13.600" height="3" fill="#1e8bd0"/><rect x="2.500" y="5" width="5" height="4.500" fill="#7fcaf0" stroke="none"/><path d="M10.500 12h4M10.500 10.500v3M14.500 10.500v3" stroke-width="1"/></svg>
<svg style="left:1578px;top:741px" width="15" height="15" viewBox="0 0 15 15"><circle cx="3.500" cy="3.500" r="3.300" fill="#1e8bd0"/><circle cx="11.500" cy="3.500" r="3.300" fill="#1e8bd0"/><circle cx="3.500" cy="11.500" r="3.300" fill="#1e8bd0"/><circle cx="11.500" cy="11.500" r="3.300" fill="#f5820b"/><path d="M1.800 3.500h3.400M9.800 3.500h3.400M11.500 1.800v3.400M2.300 10.300l2.400 2.400M4.700 10.300l-2.400 2.400M9.800 10.700h3.400M9.800 12.300h3.400" stroke="#fff" stroke-width=".9" fill="none"/></svg>
<!-- BOTTOM TOOLBAR -->
<div class="abs" style="left:24px;top:802px;width:1552px;height:6px;background:#f6f6f6"></div>
<div class="abs" style="left:25px;top:833px;width:1575px;height:1px;background:#d0d0d0"></div>
<svg style="left:60px;top:809px" width="15" height="15" viewBox="0 0 15 15" fill="none"><g transform="rotate(-40 7.500 7.500)"><path d="M2 6.500A5.500 5.500 0 0 1 12 4.500M13 8.500A5.500 5.500 0 0 1 3 10.500" stroke="#1e8bd0" stroke-width="3"/><path d="M9.500 5.500L14 6 13.800 1.500zM5.500 9.500L1 9l.2 4.500z" fill="#1e8bd0"/><path d="M2.300 6.200A5.500 5.500 0 0 1 11.500 4.200M12.700 8.800A5.500 5.500 0 0 1 3.500 10.800" stroke="#f6f6f6" stroke-width=".9"/></g></svg>
<div class="t" style="left:79px;top:810.500px;letter-spacing:-0.51px">刷新</div>
<div class="dd" style="left:118px;top:816px"></div>
<div class="grip" style="left:135px;top:810px"></div>
<svg style="left:145px;top:809px" width="15" height="15" viewBox="0 0 15 15" fill="none" stroke="#a8a8a8" stroke-width="1.200"><circle cx="7.500" cy="7.500" r="6.800"/><path d="M4.300 7.500l2.400 2.500 4-4.500"/></svg>
<div class="t" style="left:166px;top:810.500px;color:#a0a0a0;letter-spacing:-0.51px">保存</div>
<div class="dd" style="left:203px;top:816px;border-top-color:#555"></div>
<svg style="left:221px;top:811px" width="12" height="12" viewBox="0 0 12 12" fill="none" stroke="#a8a8a8" stroke-width="1.100"><rect x=".6" y=".6" width="10.800" height="10.800"/><path d="M3.300 3.300l5.400 5.400M8.700 3.300L3.300 8.700"/></svg>
<div class="t" style="left:239px;top:810.500px;color:#a0a0a0;letter-spacing:-0.51px">取消</div>
<div class="vsep" style="left:273px;top:804px;height:27px"></div>
<svg style="left:283px;top:811px" width="16" height="13" viewBox="0 0 16 13" fill="none" stroke="#1e8bd0" stroke-width="1.600"><path d="M0 1h14M0 6h10M0 11h6"/><path d="M8.500 12.500l6-6" stroke-width="2"/></svg>
<svg style="left:308px;top:811px" width="16" height="13" viewBox="0 0 16 13" fill="none" stroke="#9a9a9a" stroke-width="1.600"><path d="M0 1h13M0 6h6M0 11h6M8 8.500h7M11.500 5v7"/></svg>
<svg style="left:332px;top:811px" width="15" height="13" viewBox="0 0 15 13" fill="none" stroke="#9a9a9a" stroke-width="1.500"><path d="M0 1h14M0 6h4M0 11h4"/><rect x="6" y="4.500" width="8.500" height="8" rx="2.500" stroke-width="1.100"/><path d="M8 8.500h4.500M10.200 6.300v4.400" stroke-width="1.100"/></svg>
<svg style="left:356px;top:811px" width="15" height="13" viewBox="0 0 15 13" fill="none" stroke="#9a9a9a" stroke-width="1.600"><path d="M0 1h14M0 6h6M0 11h6M8.500 8.500h6"/></svg>
<div class="grip" style="left:380px;top:810px"></div>
<svg style="left:388px;top:810px" width="12" height="14" viewBox="0 0 12 14" fill="none" stroke="#9a9a9a" stroke-width="1.800"><path d="M1 0v14M11 .8L4.500 7l6.500 6.200"/></svg>
<svg style="left:413px;top:810px" width="8" height="14" viewBox="0 0 8 14" fill="none" stroke="#9a9a9a" stroke-width="1.800"><path d="M7.200.8L1.200 7l6 6.200"/></svg>
<svg style="left:438px;top:810px" width="8" height="14" viewBox="0 0 8 14" fill="none" stroke="#1e8bd0" stroke-width="1.800"><path d="M.8.8L6.800 7l-6 6.200"/></svg>
<svg style="left:457px;top:810px" width="12" height="14" viewBox="0 0 12 14" fill="none" stroke="#1e8bd0" stroke-width="1.800"><path d="M11 0v14M1 .8L7.500 7 1 13.200"/></svg>
<svg style="left:479px;top:810px" width="14" height="14" viewBox="0 0 14 14" fill="none" stroke="#9a9a9a" stroke-width="1.200"><path d="M.6 4V.6H4M10 .6h3.400V4M13.400 10v3.400H10M4 13.400H.6V10"/><path d="M4.500 3.500h3.500l1.500 1.500v5.500h-5z" stroke-width="1"/></svg>
<div class="grip" style="left:503px;top:810px"></div>
<svg style="left:518px;top:810px" width="13" height="14" viewBox="0 0 13 14" fill="none" stroke="#1e8bd0" stroke-width="1.500"><path d="M.8 9.500v3.700h11.400V9.500M6.500 10V1M3.300 4L6.500.9 9.700 4"/></svg>
<div class="t" style="left:536px;top:810.500px;letter-spacing:-0.49px">导出数据...</div>
<div class="dd" style="left:608px;top:816px"></div>
<div class="grip" style="left:625px;top:810px"></div>
<svg style="left:631px;top:809px" width="16" height="16" viewBox="0 0 16 16"><path d="M8 0l1.200 2.100 2.300-.8.400 2.400 2.400.4-.8 2.300L15.600 8l-2.100 1.600.8 2.300-2.400.4-.4 2.400-2.300-.8L8 16l-1.200-2.100-2.300.8-.4-2.400-2.400-.4.8-2.300L.4 8l2.100-1.600-.8-2.300 2.400-.4.400-2.400 2.300.8z" fill="#1e8bd0"/><path d="M8 5l3 3-3 3-3-3z" fill="#8fd0f5"/></svg>
<div class="abs" style="left:654px;top:806px;width:54px;height:23px;background:#fff;border:1px solid #7a7a7a"></div>
<div class="t" style="left:658px;top:810px;letter-spacing:0.05px">200</div>
<svg style="left:715px;top:809px" width="14" height="15" viewBox="0 0 14 15" fill="none" stroke="#1e8bd0" stroke-width="1.400"><path d="M2 .8h10M3.500 1l3.500 4.500L10.500 1M7 5.500V11M.8 10v4h12.400v-4"/></svg>
<div class="t" style="left:738px;top:810px;letter-spacing:-0.20px">30</div>
<div class="grip" style="left:759px;top:810px"></div>
<div class="t" style="left:787px;top:808px;font-size:9px;color:#444;letter-spacing:.5px">···</div>
<div class="t" style="left:805px;top:809px;letter-spacing:0.09px">30 行已获取 - 604ms, 2025-10-21 20:37:11</div>
<svg style="left:1578px;top:816px" width="15" height="15" viewBox="0 0 15 15"><rect x="0" y="1" width="4" height="13.500" rx="1.200" fill="#1e8bd0"/><rect x="5.500" y="11.500" width="8.500" height="3" rx="1.200" fill="#1e8bd0"/><path d="M13 10V7.500c0-2-1.500-3.500-3.500-3.500H7.500" fill="none" stroke="#1e8bd0" stroke-width="1.500"/><path d="M9 1L5.800 4 9 7z" fill="#1e8bd0"/></svg>
<!-- STATUS BAR -->
<div class="vsep" style="left:778px;top:834px;height:23px;background:#a0a0a0"></div>
<div class="t" style="left:786px;top:837px;letter-spacing:-1.00px">CST</div>
<div class="vsep" style="left:814px;top:834px;height:23px;background:#a0a0a0"></div>
<div class="t" style="left:822px;top:837px;letter-spacing:-0.10px">zh</div>
<div class="vsep" style="left:841px;top:834px;height:23px;background:#a0a0a0"></div>
<div class="t" style="left:849px;top:837px;letter-spacing:-0.51px">可写</div>
<div class="vsep" style="left:975px;top:834px;height:23px;background:#a0a0a0"></div>
<div class="t" style="left:983px;top:837px;letter-spacing:-0.50px">智能插入</div>
<div class="vsep" style="left:1103px;top:834px;height:23px;background:#a0a0a0"></div>
<div class="t" style="left:1111px;top:837px;letter-spacing:0.11px">576 : 1 : 25483</div>
<div class="vsep" style="left:1231px;top:834px;height:23px;background:#a0a0a0"></div>
<div class="t" style="left:1239px;top:837px;letter-spacing:0.04px">Sel: 0 | 0</div>
<div class="grip" style="left:1315px;top:840px;background:repeating-linear-gradient(to bottom,#a0a0a0 0,#a0a0a0 2px,transparent 2px,transparent 4px)"></div>
<!-- TASKBAR -->
<div class="abs" style="left:0;top:860px;width:1600px;height:40px;background:#000"></div>
<div class="abs" style="left:294px;top:860px;width:48px;height:40px;background:#333;border-bottom:2px solid #76b9ed"></div>
<svg style="left:16px;top:872px" width="16" height="16" viewBox="0 0 16 16" fill="#fff"><path d="M0 2.300l6.500-.9v6.100H0zM7.300 1.300L16 0v7.500H7.300zM0 8.300h6.500v6.200L0 13.600zM7.300 8.300H16V16l-8.700-1.200z"/></svg>
<svg style="left:64px;top:872px" width="16" height="16" viewBox="0 0 16 16" fill="none" stroke="#fff" stroke-width="1.300"><circle cx="10" cy="6" r="5.200"/><path d="M6.300 9.700L.6 15.400"/></svg>
<svg style="left:112px;top:872px" width="16" height="16" viewBox="0 0 16 16" fill="none" stroke="#fff" stroke-width="1.200"><rect x="2" y="4" width="8.500" height="7.500"/><path d="M.6 1v3M.6 11.500v3M.6 1.500h10M.6 14h10M14 2v2M14 6.500v3M14 12v2" /></svg>
<svg style="left:160px;top:868px" width="23" height="23" viewBox="0 0 23 23"><path d="M11.500 4.500c-4.500 0-7.800 3.300-7.800 7.800s3.300 7.700 7.800 7.700c3.300 0 6-1.900 7.100-4.800h-4.100c-.7.900-1.700 1.400-3 1.400-2 0-3.500-1.300-3.800-3.300H19c.5-5-2.800-8.800-7.500-8.800zm-3.700 6.300c.4-1.800 1.800-3 3.700-3s3.300 1.200 3.600 3z" fill="#2db4ea"/><path d="M1.500 20c-1.500-3 .5-8 5-12.500C11 3 17 .5 20 2c1.500.8 1.800 2.500 1 4.500" fill="none" stroke="#f2c11d" stroke-width="1.700"/></svg>
<svg style="left:209px;top:870px" width="22" height="19" viewBox="0 0 22 19"><path d="M0 1.500h8l1.500 2H22V18H0z" fill="#f0c754"/><path d="M0 5h22v13H0z" fill="#fbe39a"/><path d="M2.500 2.300h4" stroke="#fff" stroke-width="1"/><path d="M4.500 12.500h13V19h-3.800v-3.500h-5.400V19H4.500z" fill="#35a6e8"/></svg>
<svg style="left:257px;top:868px" width="24" height="24" viewBox="0 0 24 24"><circle cx="12" cy="12" r="11" fill="#fff" stroke="#40bcc6" stroke-width="2"/><path d="M9.800 13.200l2.900 1.700 2.200 1.700 2.800-.6-.5 2.800-1.700 2.600-6.800-.4.600-4.200z" fill="#3a2a24"/><ellipse cx="16" cy="8.200" rx="2" ry="1.250" transform="rotate(-12 16 8.200)" fill="#3a2a24"/><path d="M4.200 9C3 11.500 3.300 14.500 4.600 16.800 5 14 5 11.500 6 9.200z" fill="#3a2a24"/><path d="M5.800 9C7 5.800 10 4 13.500 4.300" fill="none" stroke="#3a2a24" stroke-width=".6"/><circle cx="10.400" cy="7.400" r=".55" fill="#3a2a24"/><path d="M16.300 11.500l.8 3.500 1.200-3" fill="none" stroke="#3a2a24" stroke-width=".7"/></svg>
<svg style="left:306px;top:868px" width="24" height="24" viewBox="0 0 24 24"><circle cx="12" cy="12" r="11" fill="#fff" stroke="#40bcc6" stroke-width="2"/><path d="M9.800 13.200l2.900 1.700 2.200 1.700 2.800-.6-.5 2.800-1.700 2.600-6.800-.4.600-4.200z" fill="#3a2a24"/><ellipse cx="16" cy="8.200" rx="2" ry="1.250" transform="rotate(-12 16 8.200)" fill="#3a2a24"/><path d="M4.200 9C3 11.500 3.300 14.500 4.600 16.800 5 14 5 11.500 6 9.200z" fill="#3a2a24"/><path d="M5.800 9C7 5.800 10 4 13.500 4.300" fill="none" stroke="#3a2a24" stroke-width=".6"/><circle cx="10.400" cy="7.400" r=".55" fill="#3a2a24"/><path d="M16.300 11.500l.8 3.500 1.200-3" fill="none" stroke="#3a2a24" stroke-width=".7"/></svg>
<!-- tray -->
<svg style="left:1347px;top:876px" width="12" height="7" viewBox="0 0 12 7" fill="none" stroke="#fff" stroke-width="1.300"><path d="M.6 6.500L6 1l5.400 5.500"/></svg>
<svg style="left:1373px;top:872px" width="10" height="17" viewBox="0 0 10 17" fill="none" stroke="#fff" stroke-width="1"><rect x="2" y=".5" width="5" height="4"/><path d="M1 4.500h7v8.500l-1.500 2h-4L1 13z"/><path d="M6.500 13.500l3 3" stroke-width="1.200"/></svg>
<svg style="left:1394px;top:873px" width="16" height="15" viewBox="0 0 16 15" fill="none" stroke="#fff" stroke-width="1.100"><rect x="3.500" y=".6" width="12" height="8.500"/><path d="M9.500 9v3M6 12.500h7M.6 3v9.500h3.500V3z"/></svg>
<svg style="left:1418px;top:873px" width="17" height="14" viewBox="0 0 17 14" fill="none" stroke="#fff" stroke-width="1.100"><path d="M.6 4.500h3L7.500 1v12L3.600 9.500h-3z"/><path d="M10 4.500c1.200 1.200 1.200 3.800 0 5M12 2.500c2.300 2.300 2.300 6.700 0 9M14 .8c3.200 3.400 3.200 9 0 12.400"/></svg>
<div class="t" style="left:1443px;top:872px;color:#fff;letter-spacing:-0.70px">ENG</div>
<div class="t" style="left:1495px;top:863px;color:#fff;letter-spacing:-0.06px">20:37</div>
<div class="t" style="left:1477px;top:882px;color:#fff;letter-spacing:0.24px">2025/10/21</div>
<svg style="left:1559px;top:872px" width="24" height="24" viewBox="0 0 24 24"><path d="M0 0h16v11H6l-3 3v-3H0z" fill="#fff"/><path d="M2.500 3h11M2.500 5.500h11M2.500 8h7" stroke="#000" stroke-width="1"/><circle cx="15.500" cy="15.500" r="8" fill="#000"/><circle cx="15.500" cy="15.500" r="7" fill="#2e2e2e"/></svg>
<div class="t" style="left:1571px;top:879.500px;font-size:12px;font-weight:bold;color:#fff">1</div>
<div class="abs" style="left:1595px;top:860px;width:1px;height:40px;background:#6a6a6a"></div>
<div class="abs" style="left:1599px;top:41px;width:1px;height:819px;background:#e2e2e2"></div>
<!-- WATERMARK -->
<div class="wm" style="left:158.8px;top:159.7px">audit审计01(Audit1)<br>audit-172.18.210.237</div>
<div class="wm" style="left:458.8px;top:159.7px">audit审计01(Audit1)<br>audit-172.18.210.237</div>
<div class="wm" style="left:758.8px;top:159.7px">audit审计01(Audit1)<br>audit-172.18.210.237</div>
<div class="wm" style="left:1058.8px;top:159.7px">audit审计01(Audit1)<br>audit-172.18.210.237</div>
<div class="wm" style="left:1358.8px;top:159.7px">audit审计01(Audit1)<br>audit-172.18.210.237</div>
<div class="wm" style="left:1658.8px;top:159.7px">audit审计01(Audit1)<br>audit-172.18.210.237</div>
<div class="wm" style="left:1958.8px;top:159.7px">audit审计01(Audit1)<br>audit-172.18.210.237</div>
<div class="wm" style="left:158.8px;top:459.7px">audit审计01(Audit1)<br>audit-172.18.210.237</div>
<div class="wm" style="left:458.8px;top:459.7px">audit审计01(Audit1)<br>audit-172.18.210.237</div>
<div class="wm" style="left:758.8px;top:459.7px">audit审计01(Audit1)<br>audit-172.18.210.237</div>
<div class="wm" style="left:1058.8px;top:459.7px">audit审计01(Audit1)<br>audit-172.18.210.237</div>
<div class="wm" style="left:1358.8px;top:459.7px">audit审计01(Audit1)<br>audit-172.18.210.237</div>
<div class="wm" style="left:1658.8px;top:459.7px">audit审计01(Audit1)<br>audit-172.18.210.237</div>
<div class="wm" style="left:1958.8px;top:459.7px">audit审计01(Audit1)<br>audit-172.18.210.237</div>
<div class="wm" style="left:158.8px;top:759.7px">audit审计01(Audit1)<br>audit-172.18.210.237</div>
<div class="wm" style="left:458.8px;top:759.7px">audit审计01(Audit1)<br>audit-172.18.210.237</div>
<div class="wm" style="left:758.8px;top:759.7px">audit审计01(Audit1)<br>audit-172.18.210.237</div>
<div class="wm" style="left:1058.8px;top:759.7px">audit审计01(Audit1)<br>audit-172.18.210.237</div>
<div class="wm" style="left:1358.8px;top:759.7px">audit审计01(Audit1)<br>audit-172.18.210.237</div>
<div class="wm" style="left:1658.8px;top:759.7px">audit审计01(Audit1)<br>audit-172.18.210.237</div>
<div class="wm" style="left:1958.8px;top:759.7px">audit审计01(Audit1)<br>audit-172.18.210.237</div>
</body></html>
